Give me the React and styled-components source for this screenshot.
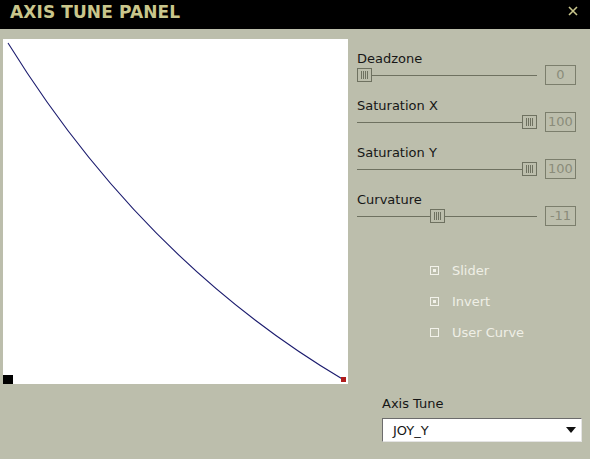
import React from "react";
import styled, { createGlobalStyle } from "styled-components";

const Global = createGlobalStyle`
  html, body { margin: 0; padding: 0; background: #bcbeac; }
  body { font-family: "DejaVu Sans", sans-serif; }
`;

const Window = styled.div`
  width: 590px;
  height: 459px;
  background: #bcbeac;
  overflow: hidden;
`;

const TitleBar = styled.div`
  height: 29px;
  background: #000;
  display: flex;
  align-items: center;
  justify-content: space-between;
  padding: 0 12px 0 10px;
  box-sizing: border-box;
`;

const Title = styled.div`
  color: #c9c68c;
  font-weight: bold;
  font-size: 17px;
  letter-spacing: 0.1px;
  margin-top: -6px;
`;

const Close = styled.svg`
  width: 10px;
  height: 10px;
  margin-top: -8px;
`;

const Body = styled.div`
  display: flex;
  padding: 10px 0 0 3px;
`;

const Graph = styled.div`
  width: 345px;
  height: 345px;
  background: #fff;
  flex: none;
  position: relative;
`;

const Side = styled.div`
  margin-left: 9px;
  width: 219px;
  padding-top: 12px;
  display: flex;
  flex-direction: column;
`;

const SliderBlock = styled.div`
  margin-bottom: 13px;
`;

const Label = styled.div`
  font-size: 13px;
  line-height: 15px;
  color: #161616;
  margin-bottom: ${(p) => (p.$tight ? "-1px" : "0")};
`;

const SliderRow = styled.div`
  display: flex;
  align-items: center;
  height: 20px;
  gap: 8px;
`;

const Track = styled.div`
  position: relative;
  width: 180px;
  height: 20px;
  &::before {
    content: "";
    position: absolute;
    left: 0;
    right: 0;
    top: 10px;
    height: 1px;
    background: #6e7160;
  }
`;

const Handle = styled.div`
  position: absolute;
  top: 3px;
  width: 13px;
  height: 12px;
  border: 1px solid #6e7160;
  background: #bcbeac;
  display: flex;
  justify-content: center;
  align-items: center;
  gap: 1px;
  & > span {
    width: 1px;
    height: 8px;
    background: #6e7160;
  }
`;

const ValueBox = styled.div`
  width: 29px;
  height: 18px;
  border: 1px solid #7b7e6c;
  color: #8a8c7a;
  font-size: 13px;
  line-height: 18px;
  text-align: center;
  box-sizing: content-box;
`;

const Checks = styled.div`
  margin-top: 23px;
  margin-left: 73px;
  display: flex;
  flex-direction: column;
  gap: 15px;
`;

const CheckRow = styled.div`
  display: flex;
  align-items: center;
  height: 16px;
  gap: 13px;
`;

const Box = styled.div`
  width: 7px;
  height: 7px;
  border: 1px solid #f2f2ea;
  display: flex;
  align-items: center;
  justify-content: center;
  & > i {
    width: 3px;
    height: 3px;
    background: ${(p) => (p.$on ? "#f2f2ea" : "transparent")};
  }
`;

const CheckLabel = styled.span`
  color: #efefe6;
  font-size: 13px;
`;

const AxisSection = styled.div`
  margin-top: 56px;
  margin-left: 25px;
`;

const Select = styled.div`
  margin-top: 7px;
  width: 200px;
  height: 24px;
  box-sizing: border-box;
  background: #fff;
  border-top: 1px solid #6c6c6c;
  border-left: 1px solid #6c6c6c;
  border-right: 1px solid #e4e4e4;
  border-bottom: 1px solid #e4e4e4;
  display: flex;
  align-items: center;
  justify-content: space-between;
  padding: 0 5px 0 10px;
  font-size: 13px;
  color: #161616;
`;

const Arrow = styled.svg`
  width: 10px;
  height: 6px;
`;

const sliders = [
  { label: "Deadzone", value: "0", pos: 0 },
  { label: "Saturation X", value: "100", pos: 165 },
  { label: "Saturation Y", value: "100", pos: 165 },
  { label: "Curvature", value: "-11", pos: 73 },
];

const checks = [
  { label: "Slider", on: true },
  { label: "Invert", on: true },
  { label: "User Curve", on: false },
];

export default function App() {
  return (
    <>
      <Global />
      <Window>
        <TitleBar>
          <Title>AXIS TUNE PANEL</Title>
          <Close viewBox="0 0 10 10">
            <path d="M1 1 L9 9 M9 1 L1 9" stroke="#c9c68c" strokeWidth="1.6" />
          </Close>
        </TitleBar>
        <Body>
          <Graph>
            <svg width="345" height="345" style={{ position: "absolute", left: 0, top: 0 }}>
              <path d="M5 4 Q140 222 341 341" stroke="#1b1b6e" strokeWidth="1.1" fill="none" />
              <rect x="0" y="336" width="10" height="10" fill="#000" />
              <rect x="338" y="338" width="5" height="5" fill="#b01c1c" />
            </svg>
          </Graph>
          <Side>
            {sliders.map((s) => (
              <SliderBlock key={s.label}>
                <Label $tight>{s.label}</Label>
                <SliderRow>
                  <Track>
                    <Handle style={{ left: s.pos }}>
                      <span /><span /><span /><span />
                    </Handle>
                  </Track>
                  <ValueBox>{s.value}</ValueBox>
                </SliderRow>
              </SliderBlock>
            ))}
            <Checks>
              {checks.map((c) => (
                <CheckRow key={c.label}>
                  <Box $on={c.on}><i /></Box>
                  <CheckLabel>{c.label}</CheckLabel>
                </CheckRow>
              ))}
            </Checks>
            <AxisSection>
              <Label>Axis Tune</Label>
              <Select>
                <span>JOY_Y</span>
                <Arrow viewBox="0 0 10 6">
                  <path d="M0 0 L10 0 L5 6 Z" fill="#111" />
                </Arrow>
              </Select>
            </AxisSection>
          </Side>
        </Body>
      </Window>
    </>
  );
}
